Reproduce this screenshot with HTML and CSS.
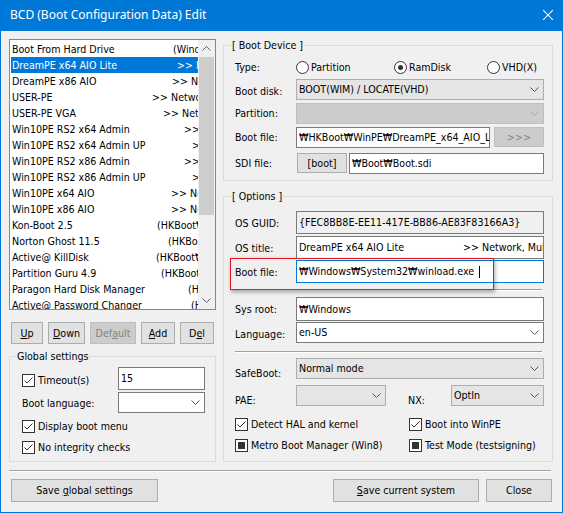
FILE: index.html
```html
<!DOCTYPE html>
<html lang="en">
<head>
<meta charset="utf-8">
<title>BCD Edit</title>
<link rel="stylesheet" href="styles.css">
</head>
<body>
<div class="window">
  <header class="titlebar">
    <span class="title">BCD (Boot Configuration Data) Edit</span>
    <svg class="close-x" width="10" height="10" viewBox="0 0 10 10"><path d="M0 0L10 10M10 0L0 10"/></svg>
  </header>
  <div class="content">
    <div class="main">
      <div class="left">
        <div class="listbox">
          <div class="items">
            <div class="item" style="--x:161px"><span>Boot From Hard Drive</span><span>(Windows Boot Manager)</span></div>
            <div class="item sel" style="--x:165px"><span>DreamPE x64 AIO Lite</span><span>&gt;&gt; Network, Multimedia</span></div>
            <div class="item" style="--x:160px"><span>DreamPE x86 AIO</span><span>&gt;&gt; Network, Multimedia</span></div>
            <div class="item" style="--x:140px"><span>USER-PE</span><span>&gt;&gt; Network</span></div>
            <div class="item" style="--x:151px"><span>USER-PE VGA</span><span>&gt;&gt; Network</span></div>
            <div class="item" style="--x:172px"><span>Win10PE RS2 x64 Admin</span><span>&gt;&gt; Network</span></div>
            <div class="item" style="--x:180px"><span>Win10PE RS2 x64 Admin UP</span><span>&gt;&gt; Network</span></div>
            <div class="item" style="--x:172px"><span>Win10PE RS2 x86 Admin</span><span>&gt;&gt; Network</span></div>
            <div class="item" style="--x:180px"><span>Win10PE RS2 x86 Admin UP</span><span>&gt;&gt; Network</span></div>
            <div class="item" style="--x:159px"><span>Win10PE x64 AIO</span><span>&gt;&gt; Network</span></div>
            <div class="item" style="--x:159px"><span>Win10PE x86 AIO</span><span>&gt;&gt; Network</span></div>
            <div class="item" style="--x:145px"><span>Kon-Boot 2.5</span><span>(HKBoot₩Kon-Boot)</span></div>
            <div class="item" style="--x:156px"><span>Norton Ghost 11.5</span><span>(HKBoot₩Ghost)</span></div>
            <div class="item" style="--x:144px"><span>Active@ KillDisk</span><span>(HKBoot₩KillDisk)</span></div>
            <div class="item" style="--x:149px"><span>Partition Guru 4.9</span><span>(HKBoot₩PGuru)</span></div>
            <div class="item" style="--x:176px"><span>Paragon Hard Disk Manager</span><span>(HKBoot₩Paragon)</span></div>
            <div class="item" style="--x:179px"><span>Active@ Password Changer</span><span>(HKBoot₩Password)</span></div>
          </div>
          <div class="vscroll">
            <div class="sb-btn"><svg width="9" height="5" viewBox="0 0 9 5"><path d="M0.5 4.5L4.5 0.5L8.5 4.5"/></svg></div>
            <div class="sb-thumb"></div>
            <div class="sb-track"></div>
            <div class="sb-btn"><svg width="9" height="5" viewBox="0 0 9 5"><path d="M0.5 0.5L4.5 4.5L8.5 0.5"/></svg></div>
          </div>
        </div>
        <div class="listbtns">
          <div class="btn w-up"><span><u>U</u>p</span></div>
          <div class="btn w-down"><span><u>D</u>own</span></div>
          <div class="btn w-default disabled"><span>Def<u>a</u>ult</span></div>
          <div class="btn w-add"><span><u>A</u>dd</span></div>
          <div class="btn w-del"><span>D<u>e</u>l</span></div>
        </div>
        <fieldset class="group global">
          <legend>Global settings</legend>
          <div class="gbody">
            <div class="grow timeout">
              <div class="chklbl gl low"><span class="cb"><svg width="11" height="11" viewBox="0 0 11 11"><path d="M1.5 5.5L4 8L9.5 2.5"/></svg></span><span>Timeout(s)</span></div>
              <div class="edit gctl">15</div>
            </div>
            <div class="grow bootlang">
              <div class="gl low1">Boot language:</div>
              <div class="combo white gctl"><span></span><svg class="chev" width="9" height="5" viewBox="0 0 9 5"><path d="M0.5 0.5L4.5 4.5L8.5 0.5"/></svg></div>
            </div>
            <div class="chkrow r-disp"><span class="cb"><svg width="11" height="11" viewBox="0 0 11 11"><path d="M1.5 5.5L4 8L9.5 2.5"/></svg></span><span>Display boot menu</span></div>
            <div class="chkrow r-noint"><span class="cb"><svg width="11" height="11" viewBox="0 0 11 11"><path d="M1.5 5.5L4 8L9.5 2.5"/></svg></span><span>No integrity checks</span></div>
          </div>
        </fieldset>
      </div>
      <div class="right">
        <fieldset class="group device">
          <legend>[ Boot Device ]</legend>
          <div class="dbody">
            <div class="row r-type">
              <div class="lbl">Type:</div>
              <div class="radios">
                <div class="ropt"><span class="rb"></span><span>Partition</span></div>
                <div class="ropt"><span class="rb on"></span><span>RamDisk</span></div>
                <div class="ropt"><span class="rb"></span><span>VHD(X)</span></div>
              </div>
            </div>
            <div class="row r-disk">
              <div class="lbl dn2">Boot disk:</div>
              <div class="combo grow1"><span>BOOT(WIM) / LOCATE(VHD)</span><svg class="chev" width="9" height="5" viewBox="0 0 9 5"><path d="M0.5 0.5L4.5 4.5L8.5 0.5"/></svg></div>
            </div>
            <div class="row r-part">
              <div class="lbl">Partition:</div>
              <div class="combo dis grow1"><span></span><svg class="chev" width="9" height="5" viewBox="0 0 9 5"><path d="M0.5 0.5L4.5 4.5L8.5 0.5"/></svg></div>
            </div>
            <div class="row r-bfile">
              <div class="lbl">Boot file:</div>
              <div class="edit w-bootpath">₩HKBoot₩WinPE₩DreamPE_x64_AIO_Lite.wim</div>
              <div class="btn disabled w-more"><span>&gt;&gt;&gt;</span></div>
            </div>
            <div class="row r-sdi">
              <div class="lbl">SDI file:</div>
              <div class="btn w-boot"><span>[boot]</span></div>
              <div class="edit grow1">₩Boot₩Boot.sdi</div>
            </div>
          </div>
        </fieldset>
        <fieldset class="group options">
          <legend>[ Options ]</legend>
          <div class="obody">
            <div class="row r-guid">
              <div class="lbl dn1">OS GUID:</div>
              <div class="edit ro grow1">{FEC8BB8E-EE11-417E-BB86-AE83F83166A3}</div>
            </div>
            <div class="row r-title">
              <div class="lbl dn1">OS title:</div>
              <div class="edit grow1"><div class="twocol" style="--x:164px"><span>DreamPE x64 AIO Lite</span><span>&gt;&gt; Network, Multimedia</span></div></div>
            </div>
            <div class="row r-obfile">
              <div class="lbl dn1">Boot file:</div>
              <div class="edit focus grow1"><span>₩Windows₩System32₩winload.exe</span><span class="caret"></span></div>
            </div>
            <div class="osep s1"></div>
            <div class="row r-sys">
              <div class="lbl">Sys root:</div>
              <div class="edit grow1">₩Windows</div>
            </div>
            <div class="row r-lang">
              <div class="lbl dn2">Language:</div>
              <div class="combo white grow1"><span>en-US</span><svg class="chev" width="9" height="5" viewBox="0 0 9 5"><path d="M0.5 0.5L4.5 4.5L8.5 0.5"/></svg></div>
            </div>
            <div class="osep s2"></div>
            <div class="row r-safe">
              <div class="lbl dn5">SafeBoot:</div>
              <div class="combo grow1"><span>Normal mode</span><svg class="chev" width="9" height="5" viewBox="0 0 9 5"><path d="M0.5 0.5L4.5 4.5L8.5 0.5"/></svg></div>
            </div>
            <div class="row r-pae">
              <div class="lbl dn5">PAE:</div>
              <div class="combo w-pae"><span></span><svg class="chev" width="9" height="5" viewBox="0 0 9 5"><path d="M0.5 0.5L4.5 4.5L8.5 0.5"/></svg></div>
              <div class="lbl-nx dn5">NX:</div>
              <div class="combo grow1"><span>OptIn</span><svg class="chev" width="9" height="5" viewBox="0 0 9 5"><path d="M0.5 0.5L4.5 4.5L8.5 0.5"/></svg></div>
            </div>
            <div class="checks c1">
              <div class="chkrow"><span class="cb"><svg width="11" height="11" viewBox="0 0 11 11"><path d="M1.5 5.5L4 8L9.5 2.5"/></svg></span><span>Detect HAL and kernel</span></div>
              <div class="chkrow"><span class="cb"><svg width="11" height="11" viewBox="0 0 11 11"><path d="M1.5 5.5L4 8L9.5 2.5"/></svg></span><span>Boot into WinPE</span></div>
            </div>
            <div class="checks c2">
              <div class="chkrow"><span class="cb ind"></span><span>Metro Boot Manager (Win8)</span></div>
              <div class="chkrow"><span class="cb ind"></span><span>Test Mode (testsigning)</span></div>
            </div>
          </div>
        </fieldset>
      </div>
    </div>
    <div class="hsep"></div>
    <div class="footer">
      <div class="btn f-global"><span>Save <u>g</u>lobal settings</span></div>
      <div class="spacer"></div>
      <div class="btn f-current"><span><u>S</u>ave current system</span></div>
      <div class="btn f-close"><span>Close</span></div>
    </div>
  </div>
  <div class="annot"></div>
</div>
</body>
</html>
```

FILE: styles.css
```css
* { box-sizing: border-box; }
html, body { margin: 0; padding: 0; }
body {
  width: 563px; height: 513px; overflow: hidden;
  background: #f0f0f0;
  font-family: "DejaVu Sans Condensed", "Liberation Sans", sans-serif;
  font-size: 10.6px; line-height: 13px; color: #000;
}
u { text-decoration: underline; text-underline-offset: 1px; }

.window {
  position: relative;
  width: 563px; height: 513px;
  border: 1px solid #0078d7;
  background: #f0f0f0;
  display: flex; flex-direction: column;
}
.titlebar {
  flex: none; height: 30px;
  background: #0078d7; color: #fff;
  display: flex; align-items: center;
  padding: 0 9px 3px 9px;
}
.title { flex: 1; font-family: "Noto Sans", "Open Sans", sans-serif; font-size: 12px; line-height: 16px; }
.close-x { display: block; flex: none; }
.close-x path { stroke: #fff; stroke-width: 1.1; fill: none; }

.content { flex: 1; display: flex; flex-direction: column; padding: 8px 9px 0 8px; }
.main { display: flex; gap: 7px; align-items: flex-start; }
.left { width: 207px; flex: none; display: flex; flex-direction: column; }
.right { width: 330px; flex: none; display: flex; flex-direction: column; }

/* list */
.listbox { height: 271px; border: 1px solid #828790; background: #fff; display: flex; }
.items { flex: 1; min-width: 0; padding: 1px 0 0 1px; overflow: hidden; }
.item {
  height: 16px; line-height: 16px;
  display: grid; grid-template-columns: var(--x) max-content;
  padding-left: 1px; white-space: nowrap; overflow: hidden;
}
.item.sel { background: #0078d7; color: #fff; }
.vscroll { width: 17px; flex: none; display: flex; flex-direction: column; background: #f0f0f0; }
.sb-btn { height: 17px; flex: none; display: flex; align-items: center; justify-content: center; }
.sb-btn svg { display: block; }
.sb-btn path { fill: none; stroke: #606060; stroke-width: 1; }
.sb-thumb { height: 158px; flex: none; background: #cdcdcd; margin: 0 1px; }
.sb-track { flex: 1; }

/* buttons */
.btn {
  height: 22px; flex: none;
  border: 1px solid #adadad; background: #e1e1e1;
  display: flex; align-items: center; justify-content: center;
  white-space: nowrap;
}
.btn.disabled { background: #cccccc; border-color: #bfbfbf; color: #838383; }
.listbtns { display: flex; gap: 5px; margin: 12px 0 0 2px; }
.w-up { width: 32px; }
.w-down { width: 37px; }
.w-default { width: 46px; }
.w-add { width: 34px; }
.w-del { width: 34px; }

/* group boxes */
.group { margin: 0; padding: 0; border: 1px solid #dcdcdc; min-width: 0; }
.group legend { padding: 0 1px; line-height: 13px; margin-left: 7px; }
.global { margin-top: 6px; }
.global legend { margin-left: 6px; }
.options { margin-top: 9px; }

.gbody { padding: 4px 10px 7px 12px; }
.grow { display: flex; align-items: center; }
.gl { width: 96px; flex: none; display: flex; align-items: center; }
.low { padding-top: 3px; }
.low1 { padding-top: 2px; }
.gctl { width: 87px; flex: none; }
.timeout { height: 23px; }
.timeout .edit { height: 23px; }
.bootlang { height: 21px; margin-top: 2px; }
.r-disp { margin-top: 7px; }
.r-noint { margin-top: 8px; }

.chkrow { display: flex; align-items: center; height: 13px; white-space: nowrap; }
.cb {
  width: 13px; height: 13px; flex: none;
  border: 1px solid #333; background: #fff;
  margin-right: 3px;
  display: flex; align-items: center; justify-content: center;
}
.cb svg { display: block; }
.cb path { fill: none; stroke: #333; stroke-width: 1; }
.cb.ind::after { content: ""; width: 7px; height: 7px; background: #333; }

/* rows */
.dbody { padding: 0 8px 6px 11px; }
.obody { padding: 0 8px 9px 11px; }
.row { display: flex; align-items: center; height: 21px; }
.lbl { width: 61px; flex: none; }
.dn1 { padding-top: 2px; }
.dn2 { padding-top: 4px; }
.dn5 { padding-top: 10px; }
.grow1 { flex: 1; min-width: 0; }

.r-type { margin-top: 5px; }
.r-disk { margin-top: 1px; }
.r-part { margin-top: 3px; }
.r-bfile { margin-top: 3px; }
.r-sdi { margin-top: 5px; }

.radios { display: grid; grid-template-columns: 98px 93px auto; }
.ropt { display: flex; align-items: center; white-space: nowrap; }
.rb {
  width: 13px; height: 13px; flex: none;
  border: 1px solid #333; border-radius: 50%; background: #fff;
  margin-right: 2px;
  display: flex; align-items: center; justify-content: center;
}
.rb.on::after { content: ""; width: 5px; height: 5px; border-radius: 50%; background: #333; }

.edit {
  height: 21px;
  border: 1px solid #7a7a7a; background: #fff;
  padding: 0 2px;
  display: flex; align-items: center;
  white-space: nowrap; overflow: hidden;
}
.edit.ro { background: #f0f0f0; }
.edit.focus { border-color: #0078d7; }
.caret { display: inline-block; flex: none; width: 1px; height: 12px; background: #000; margin-left: 5px; }
.twocol { display: grid; grid-template-columns: var(--x) max-content; }

.combo {
  height: 21px;
  border: 1px solid #adadad; background: #e5e5e5;
  display: flex; align-items: center;
  padding: 0 4px 0 2px;
  white-space: nowrap; overflow: hidden;
}
.combo span { flex: 1; }
.combo .chev { display: block; flex: none; }
.chev path { fill: none; stroke: #555; stroke-width: 1; }
.combo.dis { background: #cccccc; border-color: #bfbfbf; }
.combo.dis .chev path { stroke: #a8a8a8; }
.combo.white { background: #fff; border-color: #7a7a7a; }

.w-bootpath { width: 194px; flex: none; }
.w-more { width: 50px; height: 20px; margin-left: 4px; align-self: flex-start; }
.w-boot { width: 50px; height: 20px; margin: 0 2px 0 1px; align-self: flex-start; }

.r-guid { margin-top: 8px; height: 23px; }
.r-guid .edit { height: 23px; }
.r-title { margin-top: 2px; height: 23px; }
.r-title .edit { height: 23px; }
.r-obfile { margin-top: 1px; height: 23px; }
.r-obfile .edit { height: 23px; }
.osep { height: 2px; border-top: 1px solid #a0a0a0; border-bottom: 1px solid #fff; margin-right: 2px; }
.s1 { margin-top: 6px; }
.r-sys { margin-top: 6px; height: 24px; }
.r-sys .edit { height: 24px; }
.r-lang { margin-top: 1px; }
.s2 { margin-top: 8px; }
.r-safe { margin-top: 5px; }
.r-pae { margin-top: 6px; }
.w-pae { width: 90px; flex: none; }
.lbl-nx { width: 65px; flex: none; padding-left: 22px; }

.checks { display: grid; grid-template-columns: 174px auto; }
.c1 { margin-top: 12px; }
.c2 { margin-top: 8px; }

/* footer */
.hsep { height: 2px; margin: 8px 2px 0 0; border-top: 1px solid #a0a0a0; border-bottom: 1px solid #fff; }
.footer { display: flex; margin: 7px 1px 0 2px; }
.footer .btn { height: 23px; }
.f-global { width: 147px; }
.spacer { flex: 1; }
.f-current { width: 146px; }
.f-close { width: 66px; margin-left: 7px; }

/* annotation overlay */
.annot {
  position: absolute; left: 229px; top: 257px;
  width: 264px; height: 32px;
  border: 1px solid #e3141c;
  box-shadow: 1px 2px 4px rgba(0, 0, 0, 0.35);
  pointer-events: none;
}
```
